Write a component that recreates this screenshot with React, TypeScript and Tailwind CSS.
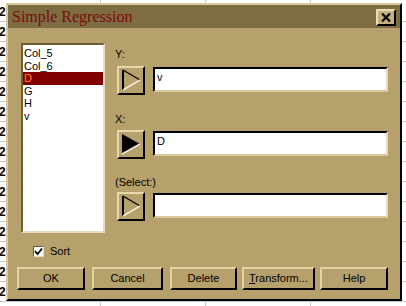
import React from "react";

const TriButton = ({ filled }: { filled?: boolean }) => (
  <div className="w-[28px] h-[29px] shrink-0 border-2 border-t-[#e8d9aa] border-l-[#e8d9aa] border-r-black border-b-black bg-[#b6a06c]">
    <svg width="24" height="25" viewBox="0 0 24 25">
      {filled ? (
        <>
          <polygon points="3,2 21,12 3,22" fill="#000" />
          <line x1="3" y1="22" x2="21" y2="12" stroke="#f4ecd4" strokeWidth="1.5" />
        </>
      ) : (
        <>
          <line x1="4" y1="2" x2="4" y2="22" stroke="#000" strokeWidth="2" />
          <line x1="4" y1="2" x2="21" y2="12" stroke="#000" strokeWidth="1.3" />
          <line x1="4" y1="22" x2="21" y2="12" stroke="#f4ecd4" strokeWidth="1.5" />
        </>
      )}
    </svg>
  </div>
);

const Field = ({ value }: { value?: string }) => (
  <div className="mt-[1px] ml-[8px] w-[235px] h-[25px] bg-white border-2 border-t-black border-l-black border-r-[#e8dcc0] border-b-[#d8c89a] pl-[2px] text-[11px] leading-[13px] pt-[2px] text-black">
    {value}
  </div>
);

const Btn = ({ children, w, ml }: { children: React.ReactNode; w: string; ml?: string }) => (
  <div
    className={`${w} ${ml ?? ""} h-[23px] border-2 border-t-[#e4d4a4] border-l-[#e4d4a4] border-r-black border-b-black bg-[#b6a06c] flex items-center justify-center text-[11px] leading-[13px] text-black`}
  >
    {children}
  </div>
);

export default function App() {
  const rows = Array.from({ length: 15 }, (_, i) => i);
  const items = ["Col_5", "Col_6", "D", "G", "H", "v"];
  return (
    <div
      className="relative w-[406px] h-[306px] bg-white overflow-hidden"
      style={{ fontFamily: '"Liberation Sans", Arial, sans-serif' }}
    >
      {/* spreadsheet background */}
      <div className="absolute inset-0 flex flex-col pt-[2px]">
        {rows.map((i) => (
          <div key={i} className="h-[20px] shrink-0 border-b border-[#c8c8c8] flex items-center">
            <span className="text-[12px] font-bold leading-none text-black -ml-[1px]">2</span>
          </div>
        ))}
      </div>
      <div className="absolute left-[100px] top-0 bottom-0 w-px bg-[#c8c8c8]" />
      <div className="absolute left-[205px] top-0 bottom-0 w-px bg-[#c8c8c8]" />
      <div className="absolute left-[310px] top-0 bottom-0 w-px bg-[#c8c8c8]" />

      {/* dialog window */}
      <div className="absolute left-[6px] top-[3px] w-[396px] h-[298px] border-2 border-t-[#d8c89a] border-l-[#d8c89a] border-r-black border-b-black bg-[#b6a06c] flex flex-col">
        {/* title bar */}
        <div className="h-[23px] bg-[#7e6c42] flex items-center justify-between pl-[4px] pr-[4px] shrink-0">
          <span
            className="text-[16px] leading-none text-[#7a0c0c]"
            style={{ fontFamily: '"Liberation Serif", "Times New Roman", serif' }}
          >
            Simple Regression
          </span>
          <div className="mt-[2px] w-[20px] h-[17px] border-2 border-t-[#eadcb0] border-l-[#eadcb0] border-r-black border-b-black bg-[#c4b07e] flex items-center justify-center">
            <svg width="10" height="9" viewBox="0 0 10 9">
              <path d="M1 0.5 L9 8.5 M9 0.5 L1 8.5" stroke="#000" strokeWidth="2.2" />
            </svg>
          </div>
        </div>

        {/* body */}
        <div className="flex flex-col pl-[13px] pt-[15px]">
          <div className="flex">
            {/* list box */}
            <div className="w-[84px] h-[190px] bg-white border-2 border-t-[#6d5c36] border-l-[#6d5c36] border-r-[#e8dcc0] border-b-[#e8dcc0] pt-[2px] text-[11px] leading-[12.5px] shrink-0">
              {items.map((it) => (
                <div
                  key={it}
                  className={
                    it === "D"
                      ? "bg-[#800000] text-[#ff8a1a] pl-[1px]"
                      : "text-black pl-[1px]"
                  }
                >
                  {it}
                </div>
              ))}
            </div>

            {/* right column */}
            <div className="ml-[10px] flex flex-col text-[11px] leading-[13px] text-black">
              <div className="mt-[5px]">Y:</div>
              <div className="mt-[5px] ml-[2px] flex">
                <TriButton />
                <Field value="v" />
              </div>
              <div className="mt-[18px]">X:</div>
              <div className="mt-[4px] ml-[2px] flex">
                <TriButton filled />
                <Field value="D" />
              </div>
              <div className="mt-[17px]">(Select:)</div>
              <div className="mt-[3px] ml-[2px] flex">
                <TriButton />
                <Field />
              </div>
            </div>
          </div>

          {/* sort */}
          <div className="mt-[12px] ml-[12px] h-[13px] flex items-center text-[11px] leading-[13px] text-black">
            <div className="w-[11px] h-[11px] bg-white border border-t-[#6d5c36] border-l-[#6d5c36] border-r-[#e8dcc0] border-b-[#e8dcc0] flex items-center justify-center">
              <svg width="9" height="9" viewBox="0 0 9 9">
                <path d="M1 4 L3.5 7 L8 1.5" stroke="#000" strokeWidth="1.8" fill="none" />
              </svg>
            </div>
            <span className="ml-[6px]">Sort</span>
          </div>

          {/* buttons */}
          <div className="mt-[9px] ml-[-4px] flex">
            <Btn w="w-[68px]">OK</Btn>
            <Btn w="w-[71px]" ml="ml-[7px]">Cancel</Btn>
            <Btn w="w-[67px]" ml="ml-[7px]">Delete</Btn>
            <Btn w="w-[73px]" ml="ml-[5px]">
              <span>
                <span className="underline">T</span>ransform...
              </span>
            </Btn>
            <Btn w="w-[68px]" ml="ml-[5px]">Help</Btn>
          </div>
        </div>
      </div>
    </div>
  );
}
